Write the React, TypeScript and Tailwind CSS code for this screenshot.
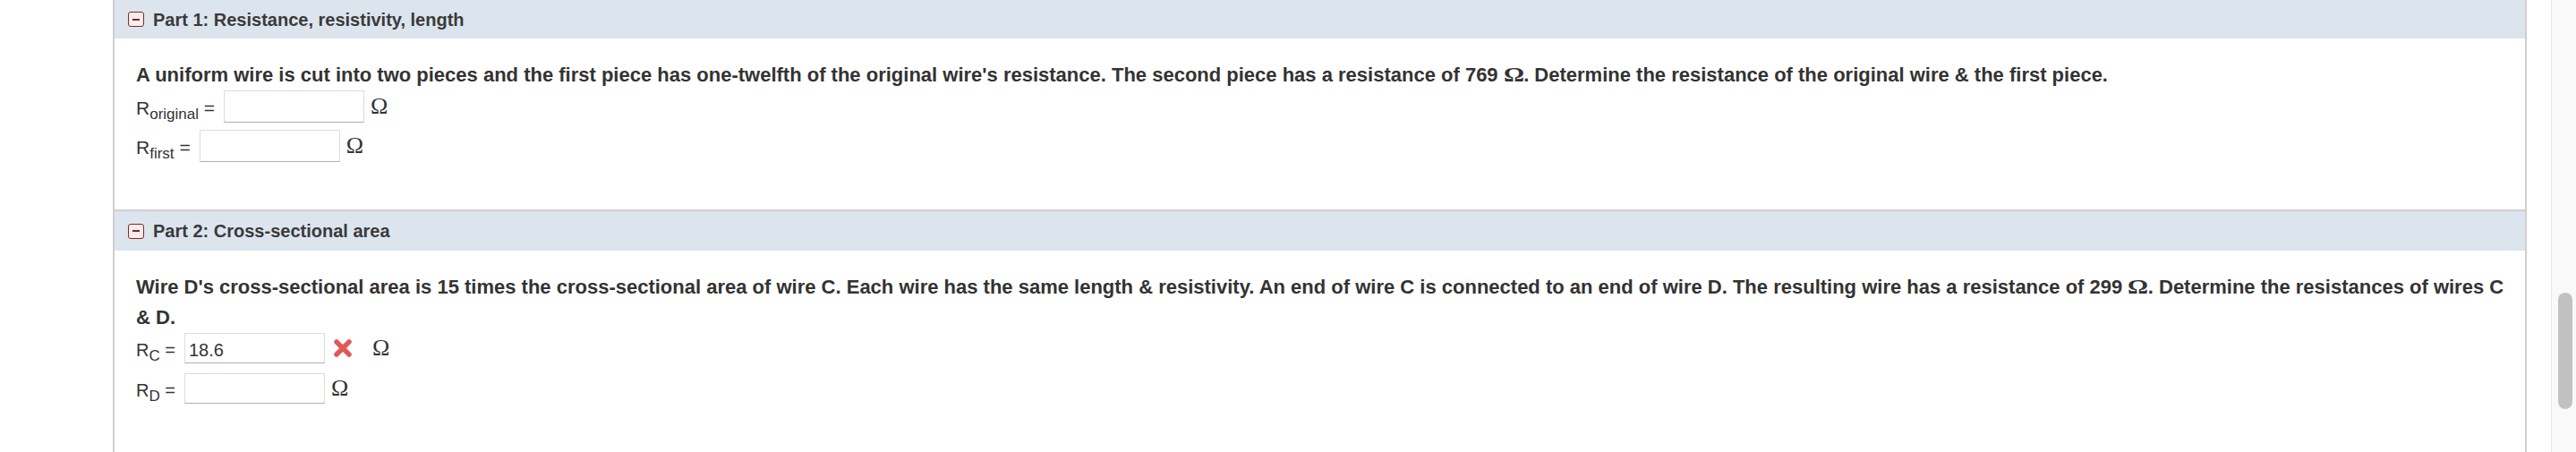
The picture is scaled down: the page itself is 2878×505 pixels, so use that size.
import type { ReactNode } from "react";

const SANS = "font-['Liberation_Sans',Arial,sans-serif]";
const SERIF = "font-['Liberation_Serif','Times_New_Roman',serif]";

const CollapseIcon = () => (
  <span className="flex h-[17px] w-[18px] items-center justify-center rounded-[3px] border-[1.5px] border-[#8e2424] bg-[#f4eeee]">
    <span className="h-[2px] w-[8px] bg-[#8e2424]" />
  </span>
);

const WrongMark = () => (
  <svg viewBox="0 0 24 22" className="h-[22px] w-[24px]">
    <path d="M5 4 L19 18 M19 4 L5 18" stroke="#e25858" strokeWidth="5.5" strokeLinecap="round" fill="none" />
  </svg>
);

const Ohm = ({ className = "" }: { className?: string }) => (
  <span className={`${SERIF} text-[26px] leading-none text-[#333] ${className}`}>Ω</span>
);

const BoldOhm = () => (
  <span className={`${SERIF} inline-block origin-left scale-x-[1.25] pr-[4px] text-[23px]`}>Ω</span>
);

const PartHeader = ({ title, className = "" }: { title: string; className?: string }) => (
  <div className={`flex items-center gap-[10px] bg-[#dce5ee] pl-[15px] ${className}`}>
    <CollapseIcon />
    <span className="text-[20px] font-bold text-[#3a3a3a]">{title}</span>
  </div>
);

interface AnswerRowProps {
  symbol: string;
  sub: string;
  value?: string;
  wrong?: boolean;
  big?: boolean;
}

const AnswerRow = ({ symbol, sub, value, wrong, big }: AnswerRowProps) => (
  <div className={`flex items-center ${big ? "h-[36px]" : "h-[34px]"}`}>
    <span className={`translate-y-[2px] whitespace-nowrap text-[#333] ${big ? "text-[21px]" : "text-[20px]"}`}>
      {symbol}
      <span className="relative top-[5px] text-[17px] leading-none">{sub}</span>
      {" ="}
    </span>
    <div
      className={`ml-[10px] flex w-[157px] items-center border border-[#dcdcdc] border-b-[#b0b0b0] bg-white pl-[4px] text-[20px] text-[#333] ${big ? "h-[36px]" : "h-[34px]"}`}
    >
      <span className="translate-y-[2px]">{value}</span>
    </div>
    {wrong && (
      <span className="ml-[8px] flex">
        <WrongMark />
      </span>
    )}
    <Ohm className={wrong ? "ml-[21px]" : "ml-[7px]"} />
  </div>
);

const Question = ({ children }: { children: ReactNode }) => (
  <p className="text-[22px] font-bold leading-[34px] text-[#333]">{children}</p>
);

export default function App() {
  return (
    <div className={`${SANS} flex h-[505px] w-full overflow-hidden bg-white`}>
      <div className="w-[126px] shrink-0" />

      <div className="flex min-w-0 flex-1 flex-col border-x-2 border-[#cfcfcf]">
        {/* Part 1 */}
        <PartHeader title="Part 1: Resistance, resistivity, length" className="h-[43px]" />
        <div className="flex h-[191px] flex-col pl-[24px] pr-[14px] pt-[24px]">
          <Question>
            A uniform wire is cut into two pieces and the first piece has one-twelfth of the original wire's
            resistance. The second piece has a resistance of 769 <BoldOhm />. Determine the resistance of the
            original wire &amp; the first piece.
          </Question>
          <div className="flex flex-col gap-[8px]">
            <AnswerRow symbol="R" sub="original" big />
            <AnswerRow symbol="R" sub="first" big />
          </div>
        </div>

        {/* Part 2 */}
        <div className="flex flex-1 flex-col border-t-2 border-[#cfcfcf]">
          <PartHeader title="Part 2: Cross-sectional area" className="h-[44px]" />
          <div className="flex flex-col pl-[24px] pr-[14px] pt-[24px]">
            <Question>
              Wire D's cross-sectional area is 15 times the cross-sectional area of wire C. Each wire has the same
              length &amp; resistivity. An end of wire C is connected to an end of wire D. The resulting wire has a
              resistance of 299 <BoldOhm />. Determine the resistances of wires C &amp; D.
            </Question>
            <div className="flex flex-col gap-[11px]">
              <AnswerRow symbol="R" sub="C" value="18.6" wrong />
              <AnswerRow symbol="R" sub="D" />
            </div>
          </div>
        </div>
      </div>

      <div className="w-[27px] shrink-0" />

      <div className="flex w-[28px] shrink-0 flex-col border-l border-[#e8e8e8] bg-[#f9f9f9]">
        <div className="ml-[7px] mt-[327px] h-[130px] w-[16px] rounded-full bg-[#c1c1c1]" />
      </div>
    </div>
  );
}
